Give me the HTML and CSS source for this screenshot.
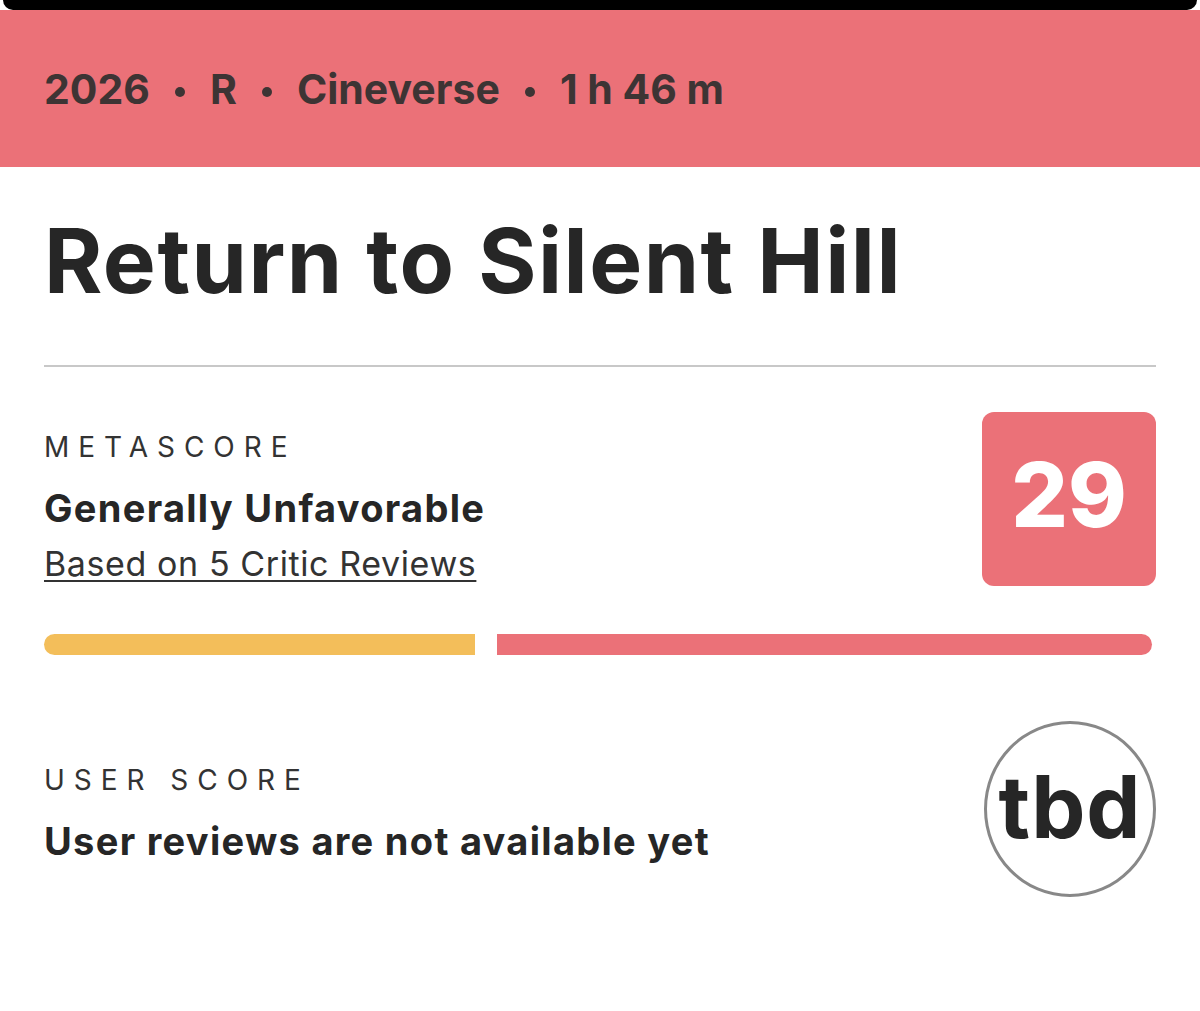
FILE: index.html
```html
<!DOCTYPE html>
<html lang="en">
<head>
<meta charset="utf-8">
<title>Return to Silent Hill</title>
<link rel="stylesheet" href="styles.css">
</head>
<body>
<div class="notch"></div>
<header class="meta-band">
  <span>2026</span><span class="dot"></span><span>R</span><span class="dot"></span><span>Cineverse</span><span class="dot"></span><span>1 h 46 m</span>
</header>
<main class="content">
  <h1 class="title">Return to Silent Hill</h1>
  <hr class="divider">
  <section class="score-row metascore">
    <div class="score-text">
      <div class="label">METASCORE</div>
      <div class="verdict">Generally Unfavorable</div>
      <a class="reviews-link" href="#">Based on 5 Critic Reviews</a>
    </div>
    <div class="score-box">29</div>
  </section>
  <div class="bars">
    <div class="bar bar-mixed"></div>
    <div class="bar bar-negative"></div>
  </div>
  <section class="score-row userscore">
    <div class="score-text">
      <div class="label">USER SCORE</div>
      <div class="verdict">User reviews are not available yet</div>
    </div>
    <div class="tbd-circle">tbd</div>
  </section>
</main>
</body>
</html>
```

FILE: styles.css
```css
html, body {
  margin: 0;
  padding: 0;
  background: #ffffff;
}

body {
  font-family: "Inter", "Lato", "Noto Sans", sans-serif;
  color: #262626;
}

.notch {
  height: 10px;
  margin: 0 3px;
  background: #000;
  border-radius: 0 0 14px 14px;
}

.meta-band {
  height: 157px;
  background: #eb7178;
  display: flex;
  align-items: center;
  padding-left: 44px;
  font-size: 41px;
  font-weight: 700;
  color: #3d3434;
}

.dot {
  width: 10px;
  height: 10px;
  border-radius: 50%;
  background: #3d3434;
  margin: 7px 25px 0;
}

.content {
  padding: 0 44px;
}

.title {
  margin: 0;
  padding-top: 39px;
  font-size: 89px;
  line-height: 110px;
  font-weight: 700;
  letter-spacing: 1.5px;
  color: #262626;
}

.divider {
  margin: 49px 0 0;
  border: 0;
  height: 2px;
  background: #c8c8c8;
}

.score-row {
  display: flex;
  justify-content: space-between;
  align-items: flex-start;
}

.metascore {
  margin-top: 45px;
}

.score-text {
  display: flex;
  flex-direction: column;
}

.label {
  font-size: 28px;
  line-height: 34px;
  font-weight: 400;
  letter-spacing: 0.32em;
  color: #333;
}

.metascore .label {
  margin-top: 18px;
}

.verdict {
  margin-top: 22px;
  font-size: 38px;
  line-height: 44px;
  font-weight: 700;
  letter-spacing: 1.3px;
  color: #262626;
}

.reviews-link {
  margin-top: 12px;
  font-size: 34px;
  line-height: 44px;
  letter-spacing: 0.6px;
  color: #333;
  text-decoration: underline;
  text-decoration-thickness: 2px;
  text-underline-offset: 4px;
}

.score-box {
  width: 174px;
  height: 164px;
  padding-bottom: 10px;
  border-radius: 12px;
  background: #eb7178;
  color: #fff;
  font-size: 89px;
  font-weight: 800;
  display: flex;
  align-items: center;
  justify-content: center;
}

.bars {
  display: flex;
  gap: 22px;
  margin-top: 48px;
  width: 1108px;
}

.bar {
  height: 21px;
}

.bar-mixed {
  flex: 0 0 431px;
  background: #f3be5a;
  border-radius: 11px 0 0 11px;
}

.bar-negative {
  flex: 1 1 auto;
  background: #eb7178;
  border-radius: 0 11px 11px 0;
}

.userscore {
  margin-top: 66px;
}

.userscore .label {
  margin-top: 42px;
}

.tbd-circle {
  width: 166px;
  height: 166px;
  border: 3px solid #888;
  border-radius: 50%;
  display: flex;
  align-items: center;
  justify-content: center;
  font-size: 86px;
  font-weight: 700;
  letter-spacing: 1px;
  color: #262626;
  line-height: 1;
  padding-bottom: 4px;
  box-sizing: content-box;
}
```
